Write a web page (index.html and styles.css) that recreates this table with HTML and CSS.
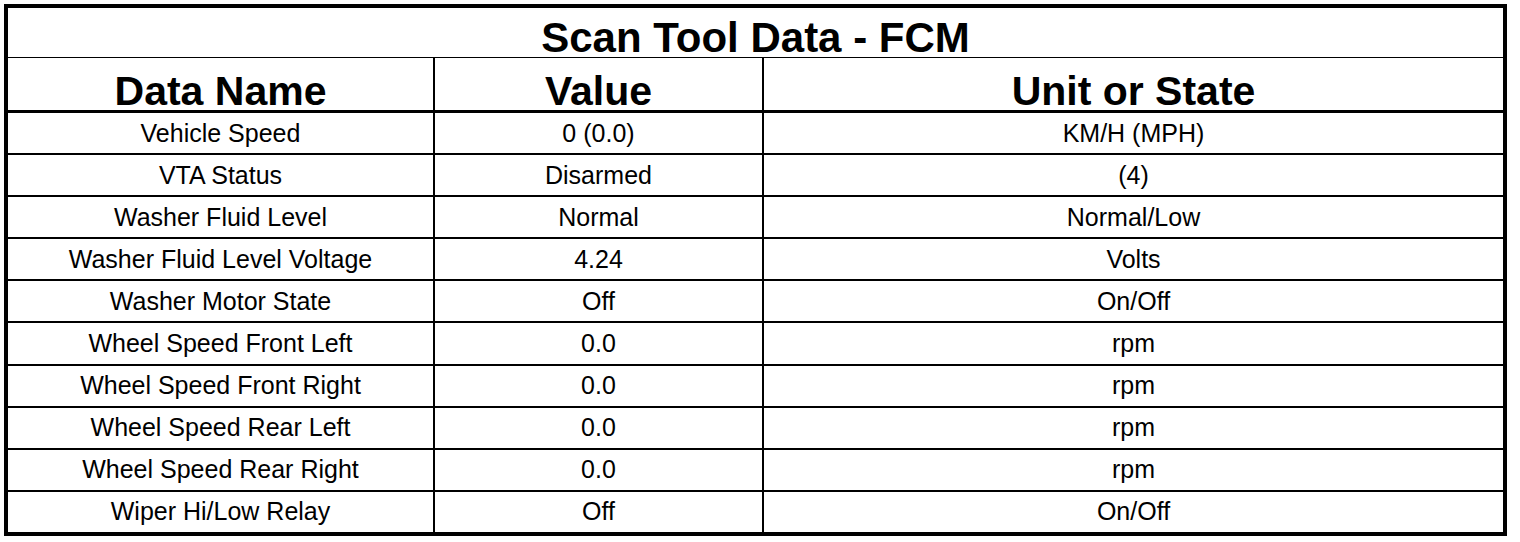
FILE: index.html
```html
<!DOCTYPE html>
<html lang="en">
<head>
<meta charset="utf-8">
<title>Scan Tool Data - FCM</title>
<link rel="stylesheet" href="styles.css">
</head>
<body>
<div class="sheet">
  <div class="title">Scan Tool Data - FCM</div>
  <div class="row head">
    <div class="cell">Data Name</div>
    <div class="cell">Value</div>
    <div class="cell">Unit or State</div>
  </div>
  <div class="rows">
    <div class="row"><div class="cell">Vehicle Speed</div><div class="cell">0 (0.0)</div><div class="cell">KM/H (MPH)</div></div>
    <div class="row"><div class="cell">VTA Status</div><div class="cell">Disarmed</div><div class="cell">(4)</div></div>
    <div class="row"><div class="cell">Washer Fluid Level</div><div class="cell">Normal</div><div class="cell">Normal/Low</div></div>
    <div class="row"><div class="cell">Washer Fluid Level Voltage</div><div class="cell">4.24</div><div class="cell">Volts</div></div>
    <div class="row"><div class="cell">Washer Motor State</div><div class="cell">Off</div><div class="cell">On/Off</div></div>
    <div class="row"><div class="cell">Wheel Speed Front Left</div><div class="cell">0.0</div><div class="cell">rpm</div></div>
    <div class="row"><div class="cell">Wheel Speed Front Right</div><div class="cell">0.0</div><div class="cell">rpm</div></div>
    <div class="row"><div class="cell">Wheel Speed Rear Left</div><div class="cell">0.0</div><div class="cell">rpm</div></div>
    <div class="row"><div class="cell">Wheel Speed Rear Right</div><div class="cell">0.0</div><div class="cell">rpm</div></div>
    <div class="row"><div class="cell">Wiper Hi/Low Relay</div><div class="cell">Off</div><div class="cell">On/Off</div></div>
  </div>
</div>
</body>
</html>
```
FILE: styles.css
```css
html, body {
  margin: 0;
  padding: 0;
  background: #fff;
}

body {
  font-family: "Liberation Sans", Arial, sans-serif;
  color: #000;
}

.sheet {
  margin: 4px;
  width: 1503px;
  height: 532px;
  box-sizing: border-box;
  border: 4px solid #000;
  display: flex;
  flex-direction: column;
}

.title {
  height: 39px;
  padding-top: 10px;
  line-height: 39px;
  font-size: 42px;
  font-weight: bold;
  text-align: center;
  border-bottom: 1px solid #000;
  white-space: nowrap;
}

.row {
  display: grid;
  grid-template-columns: 427px 329px 1fr;
}

.cell {
  border-right: 2px solid #000;
  text-align: center;
  white-space: nowrap;
}

.cell:last-child {
  border-right: 0;
}

.head {
  height: 52px;
  border-bottom: 3px solid #000;
}

.head .cell {
  padding-top: 15px;
  line-height: 37px;
  font-size: 41px;
  font-weight: bold;
}

.rows {
  flex: 1;
  display: flex;
  flex-direction: column;
}

.rows .row {
  flex: 1 1 0;
  border-bottom: 2px solid #000;
}

.rows .row:last-child {
  border-bottom: 0;
}

.rows .cell {
  display: flex;
  align-items: center;
  justify-content: center;
  font-size: 25px;
}
```
